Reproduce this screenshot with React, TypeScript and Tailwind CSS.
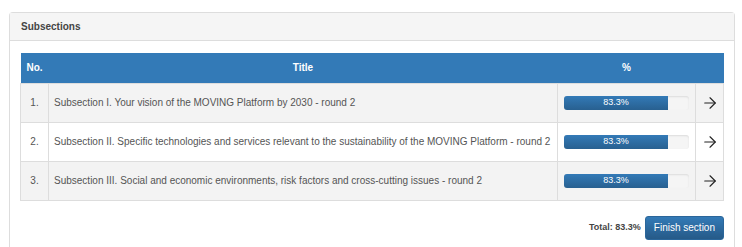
import { ArrowRight } from "lucide-react";

type Subsection = {
  no: number;
  title: string;
  percent: number;
};

const subsections: Subsection[] = [
  { no: 1, title: "Subsection I. Your vision of the MOVING Platform by 2030 - round 2", percent: 83.3 },
  {
    no: 2,
    title:
      "Subsection II. Specific technologies and services relevant to the sustainability of the MOVING Platform - round 2",
    percent: 83.3,
  },
  {
    no: 3,
    title: "Subsection III. Social and economic environments, risk factors and cross-cutting issues - round 2",
    percent: 83.3,
  },
];

function ProgressBar({ percent }: { percent: number }) {
  return (
    <div className="h-[14px] w-full overflow-hidden rounded-[3px] bg-[#f5f5f5] shadow-[inset_0_1px_2px_rgba(0,0,0,0.1)]">
      <div
        className="flex h-full items-center justify-center bg-gradient-to-b from-[#337ab7] to-[#286090] text-[9px] leading-none text-white"
        style={{ width: `${percent}%` }}
      >
        {percent}%
      </div>
    </div>
  );
}

export default function App() {
  return (
    <div className="bg-white pl-[9px] pr-[7px] pt-[12px] font-['Liberation_Sans',Arial,sans-serif]">
      <div className="rounded-t-[4px] border border-b-0 border-[#ddd]">
        <div className="flex h-[28px] items-center border-b border-[#ddd] bg-[#f5f5f5] px-[11px] text-[10px] font-bold text-[#444]">
          Subsections
        </div>
        <div className="px-[10px] pb-[8px] pt-[12px]">
          <table className="w-full table-fixed border-collapse text-[10px] text-[#555]">
            <thead>
              <tr className="h-[30px] bg-[#337ab7] text-white">
                <th className="w-[28px] px-[6px] text-left font-bold">No.</th>
                <th className="text-center font-bold">Title</th>
                <th className="w-[138px] text-center font-bold">%</th>
                <th className="w-[28px]"></th>
              </tr>
            </thead>
            <tbody>
              {subsections.map((s, i) => (
                <tr key={s.no} className={`h-[39px] ${i % 2 === 0 ? "bg-[#f3f3f3]" : "bg-white"}`}>
                  <td className="border border-[#ddd] text-center">{s.no}.</td>
                  <td className="border border-[#ddd] px-[5px]">{s.title}</td>
                  <td className="border border-[#ddd] px-[6px]">
                    <ProgressBar percent={s.percent} />
                  </td>
                  <td className="border border-[#ddd]">
                    <div className="flex justify-center">
                      <ArrowRight className="h-[18px] w-[18px] text-[#222]" strokeWidth={1.5} />
                    </div>
                  </td>
                </tr>
              ))}
            </tbody>
          </table>
          <div className="mt-[15px] flex items-center justify-end gap-[4px]">
            <span className="text-[9px] font-bold text-[#444]">Total: 83.3%</span>
            <button className="h-[24px] rounded-[3px] border border-[#2b669a] bg-gradient-to-b from-[#337ab7] to-[#265a88] px-[8px] text-[10px] text-white">
              Finish section
            </button>
          </div>
        </div>
      </div>
    </div>
  );
}
